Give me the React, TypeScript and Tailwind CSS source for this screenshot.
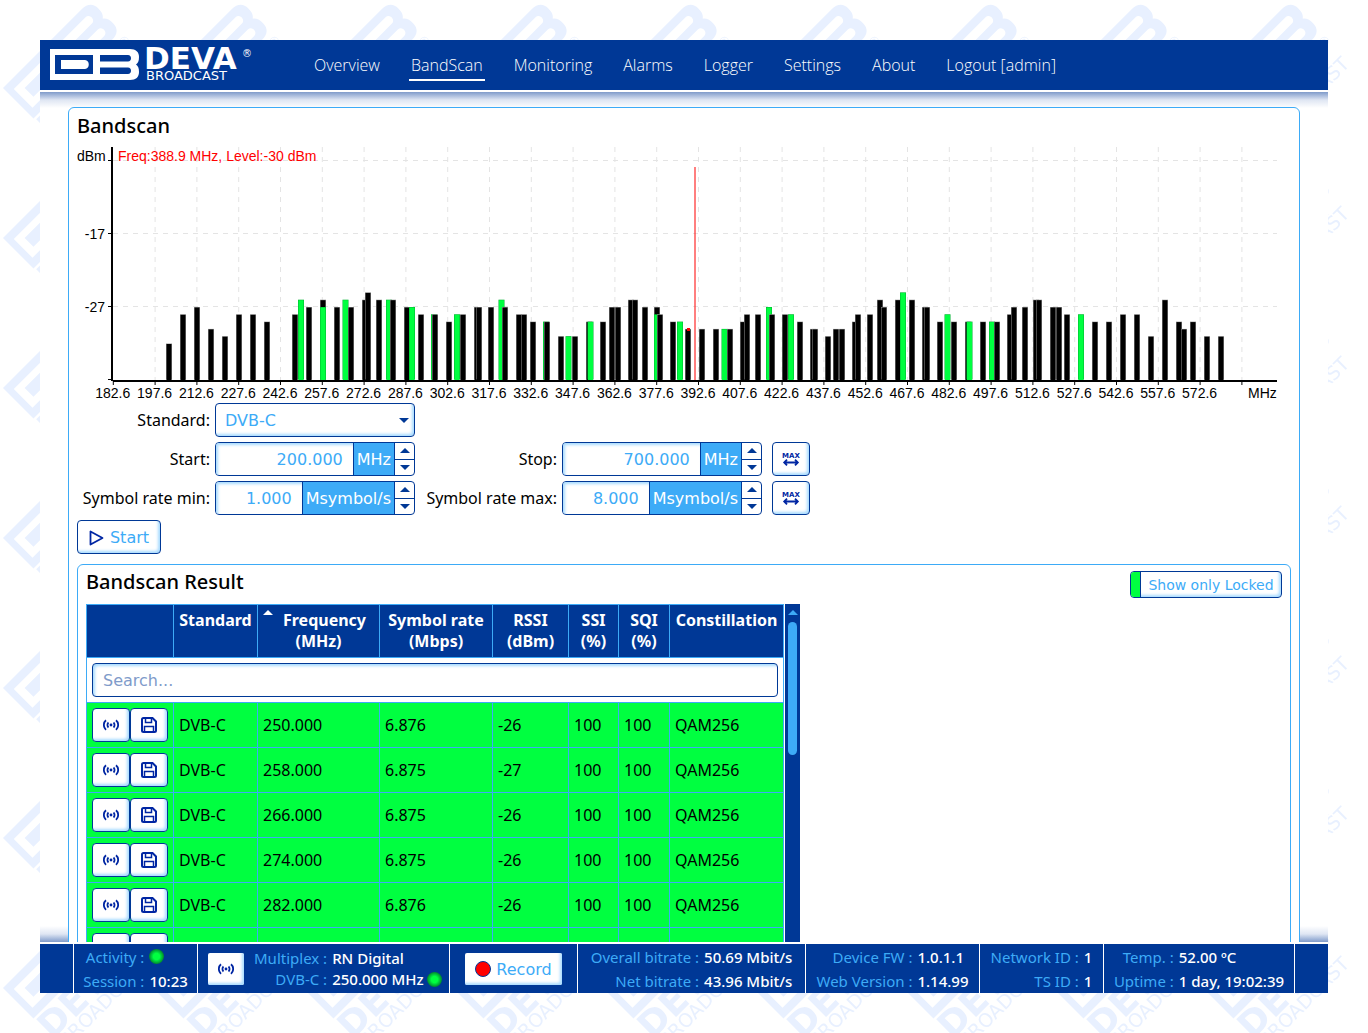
import { useState } from 'react';
import type { ReactNode } from 'react';

type Bar = [x: number, level: number, locked?: boolean];

// Bar centres along the chart, level in dBm, locked channels in green
const BARS: Bar[] = [
  [92, -32], [106, -28], [120, -27], [134, -30], [148, -31], [162, -28], [176, -28], [190, -29],
  [218, -28], [224, -26, true], [232, -27], [246, -26], [246, -27, true], [260, -27], [268.5, -26, true],
  [274, -27], [288, -26], [291, -25], [302, -26], [312, -26, true], [316, -26], [330, -27],
  [335, -27, true], [344, -28], [357, -28, true], [358, -28], [372, -29], [380, -28, true], [386, -28],
  [400, -27], [402, -27], [414, -27], [424.5, -26, true], [428, -27], [442, -28], [447, -28], [456, -29],
  [469, -29, true], [470, -29], [484, -31], [491.5, -31, true], [498, -31], [512, -29], [513.5, -29, true],
  [526, -29], [535, -27], [541, -27], [554, -26], [558, -26], [568, -27], [580, -27], [580, -28, true],
  [583, -28], [596, -29], [603, -29, true], [611, -30], [625, -30], [639, -30], [647.5, -30, true],
  [653, -30], [666, -29], [670, -28], [681, -28], [692, -27, true], [695, -28], [708, -28],
  [714, -28, true], [723, -29], [736, -30], [738, -30], [751, -31], [759, -30], [765, -30], [778, -29],
  [781, -28], [793, -28], [803, -26], [807, -27], [821, -26], [826, -25, true], [835, -26], [848, -27],
  [850, -27], [863, -29], [870.5, -28, true], [877, -29], [891, -29], [892.5, -29, true], [906, -29],
  [915, -29, true], [920, -29], [933, -28], [937, -27], [948, -27], [959, -26], [962, -26], [976, -27],
  [982, -27], [990, -28], [1004, -28, true], [1018, -29], [1032, -29], [1046, -28], [1060, -28],
  [1074, -31], [1088, -26], [1102, -29], [1107, -30], [1116, -29], [1130, -31], [1144, -31],
];

interface Result {
  id: number;
  freq: string;
  rate: string;
  rssi: number;
}

const RESULTS: Result[] = [
  { id: 1, freq: '250.000', rate: '6.876', rssi: -26 },
  { id: 2, freq: '258.000', rate: '6.875', rssi: -27 },
  { id: 3, freq: '266.000', rate: '6.875', rssi: -26 },
  { id: 4, freq: '274.000', rate: '6.875', rssi: -26 },
  { id: 5, freq: '282.000', rate: '6.876', rssi: -26 },
];

const NAV = ['Overview', 'BandScan', 'Monitoring', 'Alarms', 'Logger', 'Settings', 'About', 'Logout [admin]'];

const BASE_Y = 233;
const TICKS = Array.from({ length: 28 }, (_, i) => i);
const tickX = (i: number) => 36.3 + i * 41.8;

function LogoMark() {
  return (
    <>
      <path
        fillRule="evenodd"
        d="M0 0H80C86 0 89 3 89 8C89 12 88 14 86 15.500C88 17 89 19 89 23C89 28 86 31 80 31H0ZM5 6V25H43V6ZM50 6V12.500H78C82 12.500 82 6 78 6ZM50 18.500V25H78C82 25 82 18.500 78 18.500Z"
      />
      <path d="M11 11H35C40 11 40 20 35 20H11Z" />
    </>
  );
}

function Watermark() {
  return (
    <svg className="pointer-events-none absolute inset-y-0 left-0 -z-10 h-full w-[calc(100%-18px)]" aria-hidden="true">
      <defs>
        <pattern id="deva" width="150" height="150" patternUnits="userSpaceOnUse">
          <g transform="translate(3 88) rotate(-45)" fill="#e8f0ff">
            <g transform="scale(1.39)">
              <LogoMark />
            </g>
            <text x="-2" y="72" fontSize="36" fontWeight="700" fontFamily="DejaVu Sans">DEVA</text>
            <text x="2" y="88" fontSize="19" fontFamily="DejaVu Sans">BROADCAST</text>
            <text x="113" y="57" fontSize="12" fontFamily="DejaVu Sans">®</text>
          </g>
        </pattern>
      </defs>
      <rect width="100%" height="100%" fill="url(#deva)" />
    </svg>
  );
}

function BroadcastIcon() {
  return (
    <svg width="16" height="12" viewBox="0 0 16 12" fill="none" stroke="#0026a3" strokeWidth="1.800">
      <circle cx="8" cy="6" r="1.400" fill="#0026a3" stroke="none" />
      <path d="M5.500 3.500A3.500 3.500 0 0 0 5.500 8.500M10.500 3.500A3.500 3.500 0 0 1 10.500 8.500" />
      <path d="M3 1.200A6.400 6.400 0 0 0 3 10.800M13 1.200A6.400 6.400 0 0 1 13 10.800" />
    </svg>
  );
}

function SaveIcon() {
  return (
    <svg width="18" height="18" viewBox="0 0 18 18" fill="none" stroke="#0026a3" strokeWidth="2">
      <path d="M3.500 2H12.500L16 5.500V14.500A1.500 1.500 0 0 1 14.500 16H3.500A1.500 1.500 0 0 1 2 14.500V3.500A1.500 1.500 0 0 1 3.500 2Z" />
      <path d="M5.500 2V6.500H11.500V2" strokeWidth="1.500" />
      <path d="M4.500 16V10.500H13.500V16" strokeWidth="1.500" />
    </svg>
  );
}

function MaxIcon() {
  return (
    <svg width="18" height="16" viewBox="0 0 18 16" fill="none" stroke="#0026a3" strokeWidth="1.800">
      <text x="9" y="7" textAnchor="middle" fontSize="7" fontWeight="700" fontFamily="DejaVu Sans" fill="#0026a3" stroke="none">
        MAX
      </text>
      <path d="M2 11.500H16M5 8.700L2.200 11.500L5 14.300M13 8.700L15.800 11.500L13 14.300" />
    </svg>
  );
}

function Triangle({ down = false, className = '' }: { down?: boolean; className?: string }) {
  return (
    <svg width="10" height="5" viewBox="0 0 10 5" fill="currentColor" className={className}>
      <path d={down ? 'M0 0H10L5 5Z' : 'M0 5H10L5 0Z'} />
    </svg>
  );
}

function IconButton({ label, children, className = '' }: { label: string; children: ReactNode; className?: string }) {
  return (
    <button
      type="button"
      aria-label={label}
      className={`flex h-[34px] w-[38px] items-center justify-center rounded border border-[#003896] bg-white shadow-[inset_-2px_-2px_3px_#a8dbff] ${className}`}
    >
      {children}
    </button>
  );
}

function NumberField({ id, label, initial, unit, step }: { id: string; label: string; initial: number; unit: string; step: number }) {
  const [value, setValue] = useState(initial);

  return (
    <>
      <label htmlFor={id} className="text-right whitespace-nowrap">{label}</label>
      <div className="flex h-[34px] overflow-hidden rounded border border-[#003896] bg-white font-['DejaVu_Sans',sans-serif]">
        <input
          id={id}
          value={value.toFixed(3)}
          onChange={(e) => setValue(Number(e.target.value) || 0)}
          className="w-0 min-w-0 flex-1 pt-[2px] pr-[10px] text-right text-[#3dabf7] shadow-[inset_2px_2px_3px_#a8dbff] outline-none"
        />
        <span className="flex items-center border-l border-[#003896] bg-[#3dabf7] px-[3px] pt-[2px] text-white">{unit}</span>
        <div className="flex w-5 flex-col border-l border-[#003896] text-[#003896]">
          <button type="button" aria-label={`${label} up`} onClick={() => setValue(value + step)} className="flex flex-1 items-center justify-center border-b border-[#003896]">
            <Triangle />
          </button>
          <button type="button" aria-label={`${label} down`} onClick={() => setValue(value - step)} className="flex flex-1 items-center justify-center">
            <Triangle down />
          </button>
        </div>
      </div>
    </>
  );
}

function SpectrumChart() {
  return (
    <svg viewBox="0 0 1214 256" className="h-auto w-full" fontFamily="Liberation Sans, Arial, sans-serif" fontSize="14">
      <g stroke="#e4e4e4" strokeDasharray="5 5">
        {TICKS.slice(1).map((i) => (
          <line key={i} x1={tickX(i)} x2={tickX(i)} y1="0" y2={BASE_Y} />
        ))}
        {[13.5, 86.5, 159.5].map((y) => (
          <line key={y} x1="36" x2="1200" y1={y} y2={y} />
        ))}
      </g>

      {BARS.map(([x, level, locked], i) => {
        const top = 160.5 - (level + 27) * 7.3;
        return (
          <g key={i}>
            <rect x={x - 3} y={top - 0.5} width="6" height={BASE_Y - top} fill={locked ? '#00b030' : '#999'} />
            <rect x={x - 2.5} y={top} width="5" height={BASE_Y - top} fill={locked ? '#00ff40' : '#000'} />
          </g>
        );
      })}

      {/* Axes */}
      <rect x="34" y="0" width="2" height="234" />
      <rect x="36" y="233" width="1164" height="2" />
      <g stroke="#000">
        {[13.5, 86.5, 159.5, 232.5].map((y) => (
          <line key={y} x1="31" x2="35" y1={y} y2={y} />
        ))}
        {TICKS.map((i) => (
          <line key={i} x1={tickX(i)} x2={tickX(i)} y1="234" y2="238" />
        ))}
      </g>
      <text x="0" y="14">dBm</text>
      <text x="28" y="92" textAnchor="end">-17</text>
      <text x="28" y="165" textAnchor="end">-27</text>
      {TICKS.slice(0, 27).map((i) => (
        <text key={i} x={tickX(i) - 0.5} y="251" textAnchor="middle">{(182.6 + i * 15).toFixed(1)}</text>
      ))}
      <text x="1171" y="251">MHz</text>

      {/* Cursor */}
      <rect x="617" y="20" width="2" height="213" fill="#ff0000" fillOpacity="0.5" />
      <rect x="610" y="181" width="3" height="3" fill="#ff0000" />
      <text x="41" y="14" fill="#ff0000">Freq:388.9 MHz, Level:-30 dBm</text>
    </svg>
  );
}

const cell = 'border-x border-[#3dabf7] px-[5px]';

function ResultRow({ result }: { result?: Result }) {
  return (
    <tr className="h-[45px] border-y border-[#3dabf7] bg-[#00ff40]">
      <td className={cell}>
        <div className="flex">
          <IconButton label="Tune"><BroadcastIcon /></IconButton>
          <IconButton label="Save"><SaveIcon /></IconButton>
        </div>
      </td>
      <td className={cell}>{result && 'DVB-C'}</td>
      <td className={cell}>{result?.freq}</td>
      <td className={cell}>{result?.rate}</td>
      <td className={cell}>{result?.rssi}</td>
      <td className={cell}>{result && 100}</td>
      <td className={cell}>{result && 100}</td>
      <td className={cell}>{result && 'QAM256'}</td>
    </tr>
  );
}

function ResultTable() {
  return (
    <table className="table-fixed border-collapse border border-[#3dabf7]">
      <colgroup>
        <col className="w-[87px]" />
        <col className="w-[84px]" />
        <col className="w-[122px]" />
        <col className="w-[113px]" />
        <col className="w-[76px]" />
        <col className="w-[50px]" />
        <col className="w-[51px]" />
        <col className="w-[114px]" />
      </colgroup>
      <thead>
        <tr className="h-[53px] bg-[#003896] align-top leading-[21px] text-white [&>th]:border [&>th]:border-[#3dabf7] [&>th]:pt-[5px] [&>th]:font-bold">
          <th aria-label="Actions" />
          <th>Standard</th>
          <th>
            <div className="flex justify-between pr-[13px] pl-[5px]">
              <Triangle />
              Frequency
            </div>
            (MHz)
          </th>
          <th>Symbol rate<br />(Mbps)</th>
          <th>RSSI<br />(dBm)</th>
          <th>SSI<br />(%)</th>
          <th>SQI<br />(%)</th>
          <th>Constillation</th>
        </tr>
        <tr className="h-[45px]">
          <td colSpan={8} className="border border-[#3dabf7] px-[5px]">
            <input
              aria-label="Search"
              placeholder="Search..."
              className="block h-[34px] w-full rounded border border-[#003896] px-[10px] font-['DejaVu_Sans',sans-serif] text-[#3dabf7] shadow-[inset_2px_2px_3px_#a8dbff] outline-none placeholder:text-[#809bca]"
            />
          </td>
        </tr>
      </thead>
      <tbody>
        {RESULTS.map((r) => (
          <ResultRow key={r.id} result={r} />
        ))}
        <ResultRow />
      </tbody>
    </table>
  );
}

function Led() {
  return <span className="inline-block size-[15px] rounded-full bg-radial from-[#00ff40] from-30% to-[#007a2c] to-75%" />;
}

function Stats({ rows, className = '' }: { rows: [string, ReactNode][]; className?: string }) {
  return (
    <dl className={`grid grid-cols-[auto_auto] content-center justify-center gap-x-[5px] border-l border-white leading-6 whitespace-nowrap ${className}`}>
      {rows.map(([label, value]) => (
        <div key={label} className="contents">
          <dt className="text-right text-[#3dabf7]">{label} :</dt>
          <dd className="flex items-center font-medium text-white">{value}</dd>
        </div>
      ))}
    </dl>
  );
}

export default function App() {
  return (
    <div className="relative isolate h-screen bg-white p-10 font-['Noto_Sans',sans-serif] text-base text-black">
      <Watermark />
      <div className="flex h-full flex-col bg-white">
        <header className="flex h-[50px] shrink-0 items-center bg-[#003896]">
          <svg width="220" height="50" viewBox="0 0 220 50" className="ml-[10px]" fill="#fff" fontFamily="DejaVu Sans">
            <g transform="translate(0 9)">
              <LogoMark />
            </g>
            <text x="94" y="29" fontSize="31" fontWeight="700">DEVA</text>
            <text x="96" y="40" fontSize="13">BROADCAST</text>
            <text x="192" y="17" fontSize="10">®</text>
          </svg>
          <nav className="ml-[42px] flex gap-[27px] font-['Open_Sans',sans-serif] font-light text-white">
            {NAV.map((item) => (
              <a
                key={item}
                href="#"
                className={`border-b-2 px-[2px] pb-[2px] pt-1 whitespace-nowrap ${item === 'BandScan' ? 'border-white' : 'border-transparent'}`}
              >
                {item}
              </a>
            ))}
          </nav>
        </header>

        <main className="relative isolate mt-[2px] min-h-0 flex-1 overflow-hidden px-7 pt-[15px]">
          <div className="absolute inset-x-0 top-0 -z-10 h-4 bg-linear-to-b from-[#809bca] via-[#dfe6f3] to-white" />
          <div className="absolute inset-x-0 bottom-0 -z-10 h-4 bg-linear-to-t from-[#809bca] via-[#dfe6f3] to-white" />

          <section className="rounded-md border border-[#3dabf7] bg-white px-2">
            <h1 className="h-[39px] pt-1 text-xl font-medium">Bandscan</h1>
            <SpectrumChart />

            <form className="grid grid-cols-[133px_200px_137px_200px_auto] items-center justify-start gap-[5px]" onSubmit={(e) => e.preventDefault()}>
              <label htmlFor="standard" className="text-right">Standard:</label>
              <div className="relative col-span-4 w-[200px]">
                <select
                  id="standard"
                  className="block h-[34px] w-full appearance-none rounded border border-[#003896] bg-white px-[9px] pt-[2px] font-['DejaVu_Sans',sans-serif] text-[#3dabf7] shadow-[inset_-2px_-2px_3px_#a8dbff] outline-none"
                >
                  <option>DVB-C</option>
                </select>
                <Triangle down className="pointer-events-none absolute top-[15px] right-[6px] text-[#003896]" />
              </div>
              <NumberField id="start" label="Start:" initial={200} unit="MHz" step={1} />
              <NumberField id="stop" label="Stop:" initial={700} unit="MHz" step={1} />
              <IconButton label="Full frequency range" className="ml-[5px]"><MaxIcon /></IconButton>
              <NumberField id="rate-min" label="Symbol rate min:" initial={1} unit="Msymbol/s" step={0.1} />
              <NumberField id="rate-max" label="Symbol rate max:" initial={8} unit="Msymbol/s" step={0.1} />
              <IconButton label="Full symbol rate range" className="ml-[5px]"><MaxIcon /></IconButton>
              <button
                type="submit"
                className="flex h-[34px] w-[84px] items-center justify-center gap-[6px] rounded border border-[#003896] pt-[2px] font-['DejaVu_Sans',sans-serif] text-[#3dabf7] shadow-[inset_-2px_-2px_3px_#a8dbff]"
              >
                <svg width="15" height="16" viewBox="0 0 15 16" fill="none" stroke="#0026a3" strokeWidth="1.800" strokeLinejoin="round">
                  <path d="M1.500 1.500V14.500L13.500 8Z" />
                </svg>
                Start
              </button>
            </form>

            <section className="mt-[10px] rounded-md border border-[#3dabf7] px-2">
              <div className="flex h-[39px] items-start justify-between pt-[3px]">
                <h2 className="text-xl font-medium">Bandscan Result</h2>
                <button
                  type="button"
                  className="mt-[3px] flex h-[27px] w-[152px] items-center overflow-hidden rounded border border-[#003896] font-['DejaVu_Sans',sans-serif] text-sm text-[#3dabf7] shadow-[inset_-2px_-2px_3px_#a8dbff]"
                >
                  <span className="h-full w-[10px] border-r border-[#003896] bg-[#00ff40]" />
                  <span className="flex-1">Show only Locked</span>
                </button>
              </div>
              <div className="flex">
                <ResultTable />
                <div className="ml-px flex w-[15px] flex-col items-center bg-[#003896] pt-[6px] text-[#3dabf7]">
                  <Triangle />
                  <div className="mt-[7px] h-[133px] w-[9px] rounded-full bg-[#3dabf7]" />
                </div>
              </div>
            </section>
          </section>
        </main>

        <footer className="mt-[2px] flex h-[49px] shrink-0 justify-center bg-[#003896] text-[15px]">
          <Stats className="w-[124px]" rows={[['Activity', <Led key="led" />], ['Session', '10:23']]} />
          <div className="flex w-[252px] items-center border-l border-white pl-[10px]">
            <button type="button" aria-label="Tuner" className="flex h-8 w-9 items-center justify-center rounded-xs bg-white shadow-[inset_-2px_-2px_3px_#a8dbff]">
              <BroadcastIcon />
            </button>
            <dl className="ml-[10px] grid grid-cols-[auto_auto] gap-x-[5px] leading-[21px] whitespace-nowrap">
              <dt className="text-right text-[#3dabf7]">Multiplex :</dt>
              <dd className="font-medium text-white">RN Digital</dd>
              <dt className="text-right text-[#3dabf7]">DVB-C :</dt>
              <dd className="flex items-center gap-[3px] font-medium text-white">250.000 MHz <Led /></dd>
            </dl>
          </div>
          <div className="flex w-[128px] items-center justify-center border-l border-white">
            <button type="button" className="flex h-8 w-[97px] items-center justify-center gap-[5px] rounded-xs bg-white font-['DejaVu_Sans',sans-serif] text-base text-[#3dabf7] shadow-[inset_-2px_-2px_3px_#a8dbff]">
              <span className="size-4 rounded-full border border-[#003896] bg-[#ff0000]" />
              <span className="pt-[2px]">Record</span>
            </button>
          </div>
          <Stats className="w-[228px]" rows={[['Overall bitrate', '50.69 Mbit/s'], ['Net bitrate', '43.96 Mbit/s']]} />
          <Stats className="w-[174px]" rows={[['Device FW', '1.0.1.1'], ['Web Version', '1.14.99']]} />
          <Stats className="w-[124px]" rows={[['Network ID', '1'], ['TS ID', '1']]} />
          <Stats className="w-[192px] border-r" rows={[['Temp.', '52.00 ºC'], ['Uptime', '1 day, 19:02:39']]} />
        </footer>
      </div>
    </div>
  );
}
